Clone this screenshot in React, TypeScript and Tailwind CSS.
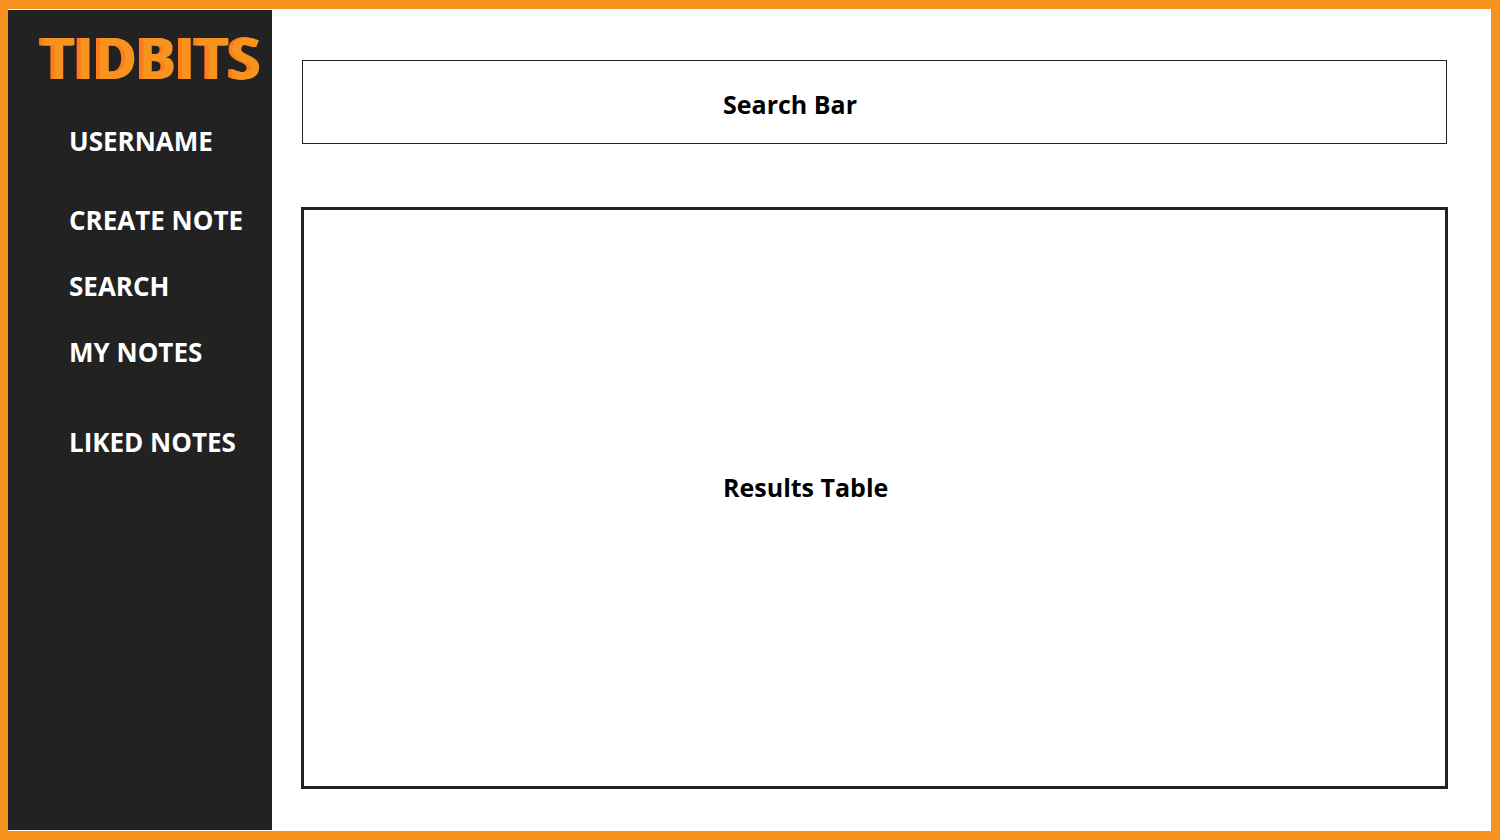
const navItems = [
  { label: 'CREATE NOTE', href: '#create', spacing: 'mt-[47px]' },
  { label: 'SEARCH', href: '#search', spacing: 'mt-[34px]' },
  { label: 'MY NOTES', href: '#notes', spacing: 'mt-[34px]' },
  { label: 'LIKED NOTES', href: '#liked', spacing: 'mt-[58px]' },
];

function Sidebar() {
  return (
    <aside className="my-px w-[264px] shrink-0 bg-[#222222] text-[26px] text-white">
      <h1 className="mt-[15px] pl-[34px] text-[58px] leading-[64px] font-bold whitespace-nowrap text-[#f7931e] [text-shadow:-1px_0_#ff7b1d,-2px_0_#ff7b1d,-3px_0_#ff7b1d,-4px_0_#ff7b1d]">
        TIDBITS
      </h1>
      <a href="#profile" className="mt-9 block pl-[61px] leading-8">
        USERNAME
      </a>
      <nav aria-label="Main" className="flex flex-col pl-[61px] leading-8 whitespace-nowrap">
        {navItems.map((item) => (
          <a key={item.label} href={item.href} className={item.spacing}>
            {item.label}
          </a>
        ))}
      </nav>
    </aside>
  );
}

export default function App() {
  return (
    <div className="flex min-h-screen border-[9px] border-l-8 border-[#f7931e] bg-white font-['Open_Sans','Noto_Sans',sans-serif] text-[25px] font-bold text-black">
      <Sidebar />
      <main className="flex min-w-0 flex-1 flex-col pt-[51px] pr-[43px] pb-[42px] pl-[29px]">
        <input
          type="search"
          aria-label="Search Bar"
          placeholder="Search Bar"
          className="mx-px h-[84px] border border-[#222222] pt-1 pl-[420px] outline-none placeholder:text-black placeholder:opacity-100"
        />
        <section
          aria-labelledby="results-title"
          className="mt-[63px] flex flex-1 items-center border-3 border-[#222222] pb-5 pl-[419px]"
        >
          <h2 id="results-title">Results Table</h2>
        </section>
      </main>
    </div>
  );
}
